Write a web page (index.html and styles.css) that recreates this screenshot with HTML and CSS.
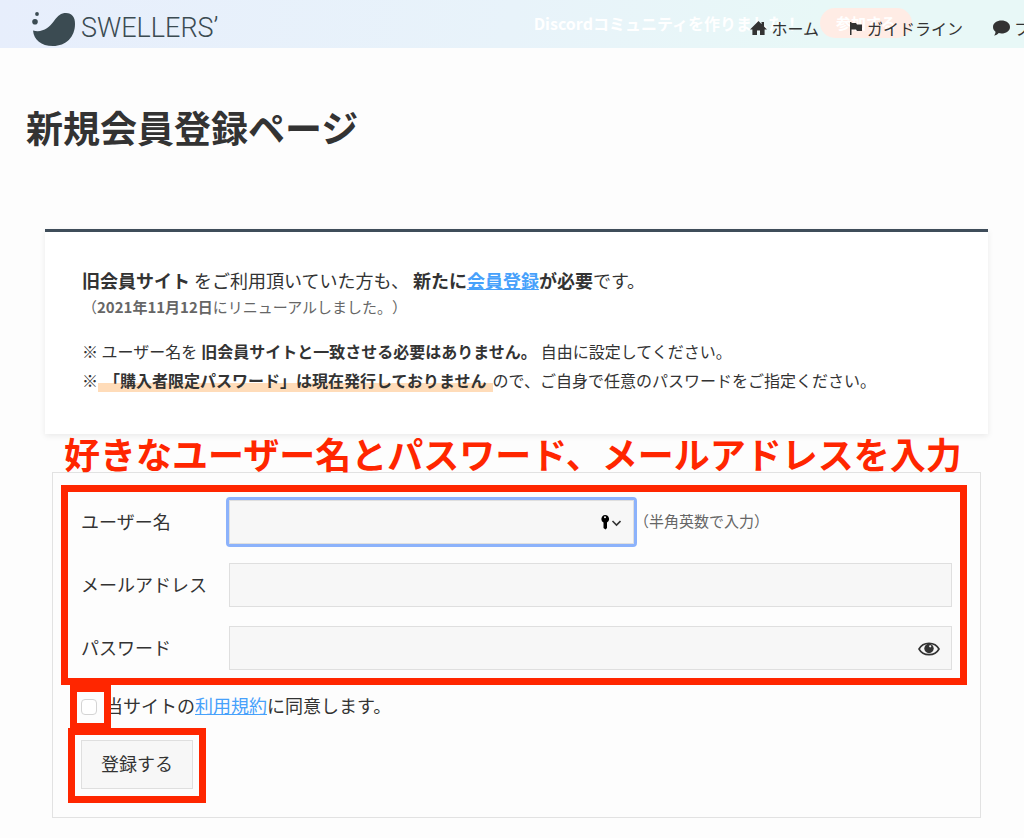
FILE: index.html
```html
<!DOCTYPE html>
<html lang="ja">
  <head>
    <meta charset="utf-8">
    <meta name="viewport" content="width=device-width, initial-scale=1">
    <title>新規会員登録ページ</title>
    <link rel="stylesheet" href="styles.css">
  </head>
  <body>
    <header class="header">
      <div class="promo">
        <span>Discordコミュニティを作りました！</span>
        <a class="promo-btn" href="#">参加する</a>
      </div>
      <a class="logo" href="#">
        <svg class="logo-mark" viewBox="0 0 44 36" aria-hidden="true">
          <circle cx="6" cy="4" r="1.900"/>
          <circle cx="4" cy="11.700" r="2.800"/>
          <path d="M2 20.500C11 23 18 18 23 11C27 5.500 30 3 35 3C41 3 44 7 44 14C44 27 35 36 22 36C10 36 3 30 2 20.500Z"/>
        </svg>
        <span>SWELLERS’</span>
      </a>
      <nav class="nav">
        <a href="#">
          <svg class="icon" viewBox="0 0 17 16" aria-hidden="true"><path d="M8.500 1L11.500 4V2H14V6.400L17 9.500H14.600V15H10V10.500H7V15H2.400V9.500H0Z"/></svg>
          ホーム
        </a>
        <a href="#">
          <svg class="icon icon-flag" viewBox="0 0 12 13" aria-hidden="true"><path d="M0 0H1.500V1H6L7 2.500H12V9H7L6 7.500H1.500V13H0Z"/></svg>
          ガイドライン
        </a>
        <a href="#">
          <svg class="icon" viewBox="0 0 17 16" aria-hidden="true"><path d="M8.500 0.500C13 0.500 17 3 17 7C17 11 13 13.500 8.500 13.500C7.500 13.500 6.500 13.400 5.700 13.100C4.500 14.500 3 15.500 1 15.500C2 14.500 2.500 13 2.500 11.700C1 10.500 0 9 0 7C0 3 4 0.500 8.500 0.500Z"/></svg>
          フ
        </a>
      </nav>
    </header>

    <main class="main">
      <h1>新規会員登録ページ</h1>

      <section class="info">
        <p class="lead"><strong class="old-site">旧会員サイト</strong>をご利用頂いていた方も、<strong class="required">新たに<a href="#">会員登録</a>が必要</strong>です。</p>
        <p class="renewal">（<strong>2021年11月12日</strong>にリニューアルしました。）</p>
        <ul class="notes">
          <li>※ ユーザー名を<strong class="free-name">旧会員サイトと一致させる必要はありません。</strong>自由に設定してください。</li>
          <li>※<strong class="marker">「購入者限定パスワード」は現在発行しておりません</strong>ので、ご自身で任意のパスワードをご指定ください。</li>
        </ul>
      </section>

      <p class="callout">好きなユーザー名とパスワード、メールアドレスを入力</p>

      <form class="form">
        <div class="fields">
          <div class="row">
            <label for="username">ユーザー名</label>
            <div class="control control-user">
              <input class="input focused" type="text" id="username">
              <svg class="key" viewBox="0 0 20 15" aria-hidden="true">
                <path fill-rule="evenodd" d="M4 0A4 4 0 0 1 6 7.500V13L4.500 14.500L2.500 13V7.500A4 4 0 0 1 4 0ZM4 1.300A1 1 0 0 0 4 3.300A1 1 0 0 0 4 1.300Z"/>
                <path class="line" d="M11.500 6L15.500 10L19.500 6"/>
              </svg>
            </div>
            <span class="hint">（半角英数で入力）</span>
          </div>
          <div class="row">
            <label for="email">メールアドレス</label>
            <div class="control">
              <input class="input" type="email" id="email">
            </div>
          </div>
          <div class="row">
            <label for="password">パスワード</label>
            <div class="control">
              <input class="input" type="password" id="password">
              <button class="eye" type="button" aria-label="パスワードを表示">
                <svg viewBox="0 0 22 14" aria-hidden="true">
                  <path class="line" d="M1 7C5 -0.500 17 -0.500 21 7C17 14.500 5 14.500 1 7Z"/>
                  <circle cx="11" cy="6.500" r="4.700"/>
                  <circle class="glint" cx="12.200" cy="4.300" r="1.100"/>
                </svg>
              </button>
            </div>
          </div>
        </div>

        <div class="agree">
          <span class="check-wrap"><input type="checkbox" id="agree"></span>
          <label for="agree">当サイトの<a href="#">利用規約</a>に同意します。</label>
        </div>

        <div class="submit">
          <button class="btn" type="submit">登録する</button>
        </div>
      </form>
    </main>
  </body>
</html>
```
FILE: styles.css
```css
* {
  box-sizing: border-box;
}

body {
  margin: 0;
  background: #fdfdfd;
  color: #333;
  font-family: 'Noto Sans CJK JP', sans-serif;
  font-size: 18px;
  text-spacing-trim: space-all;
}

a {
  color: #47a1fb;
}

h1,
p,
ul {
  margin: 0;
}

/* header */
.header {
  position: relative;
  display: flex;
  align-items: center;
  justify-content: space-between;
  height: 48px;
  padding-left: 31px;
  background: linear-gradient(100deg, #e7eefc 0%, #e8f3fa 50%, #e8f8f7 80%);
  overflow: hidden;
}

.promo {
  position: absolute;
  top: 8px;
  right: 112px;
  display: flex;
  align-items: center;
  gap: 20px;
  color: #fff;
  font-size: 16px;
  font-weight: 700;
  line-height: 30px;
}

.promo-btn {
  padding: 0 16px;
  border-radius: 15px;
  background: #ffece5;
  color: #fff;
  font-size: 15px;
  text-decoration: none;
}

.promo span {
  line-height: 28px;
}

.logo {
  position: relative;
  display: flex;
  align-items: center;
  gap: 6px;
  padding-top: 8px;
  color: #3b4b52;
  font-family: Roboto, sans-serif;
  font-size: 27px;
  font-weight: 300;
  line-height: 36px;
  text-decoration: none;
}

.logo-mark {
  width: 44px;
  height: 36px;
  fill: #3b4b52;
}

.nav {
  position: relative;
  display: flex;
  gap: 30px;
  padding-top: 8px;
  font-size: 16px;
  line-height: 24px;
  margin-right: -6px;
}

.nav a {
  display: flex;
  align-items: center;
  gap: 4px;
  color: #333;
  text-decoration: none;
}

.icon {
  width: 17px;
  height: 16px;
  fill: #333;
}

.icon-flag {
  width: 14px;
  height: 13px;
}

/* page */
.main {
  padding: 54px 17px 21px 26px;
}

h1 {
  font-size: 37px;
  font-weight: 700;
  line-height: 50px;
}

.info {
  margin: 77px 19px 0;
  padding: 32px 37px 39px;
  border-top: 3px solid #3f4d5a;
  background: #fff;
  box-shadow: 0 2px 6px rgba(0, 0, 0, 0.08);
}

.lead {
  line-height: 32px;
}

.old-site {
  margin-right: 4px;
}

.required {
  margin-left: 4px;
}

.renewal {
  color: #666;
  font-size: 15px;
  line-height: 22px;
}

.notes {
  margin-top: 19px;
  padding: 0;
  list-style: none;
  font-size: 16px;
  line-height: 29px;
}

.free-name {
  margin: 0 4px;
}

.marker {
  padding: 0 6px;
  background: linear-gradient(transparent 64%, #ffdcb9 64%);
}

.callout {
  margin: 0 38px;
  color: #ff2600;
  font-size: 36px;
  font-weight: 700;
  line-height: 38px;
  white-space: nowrap;
}

/* form */
.form {
  margin: 0 26px;
  padding: 12px 13px 14px 8px;
  border: 1px solid #e2e2e2;
}

.fields {
  display: flex;
  flex-direction: column;
  gap: 19px;
  padding: 8px 8px 8px 13px;
  border: 7px solid #ff2600;
}

.row {
  display: flex;
  align-items: center;
}

.row label {
  flex: 0 0 148px;
  padding-bottom: 3px;
}

.control {
  position: relative;
  flex: 1;
}

.control-user {
  flex: 0 0 56%;
  max-width: 405px;
}

.input {
  display: block;
  width: 100%;
  height: 44px;
  padding: 0 36px 0 12px;
  border: 1px solid #dfdfdf;
  border-radius: 0;
  background: #f7f7f7;
  font: inherit;
}

.focused,
.input:focus {
  outline: 3px solid #8cb2fb;
  border-radius: 1px;
}

.key {
  position: absolute;
  top: 15px;
  right: 13px;
  width: 20px;
  height: 15px;
}

.line {
  fill: none;
  stroke: currentColor;
  stroke-width: 1.6;
}

.eye {
  position: absolute;
  top: 16px;
  right: 12px;
  padding: 0;
  border: 0;
  background: none;
  color: #333;
  cursor: pointer;
}

.eye svg {
  display: block;
  width: 22px;
  height: 14px;
  fill: #333;
}

.eye .line {
  fill: none;
}

.eye .glint {
  fill: #f7f7f7;
}

.hint {
  padding-bottom: 3px;
  color: #666;
  font-size: 15px;
  white-space: nowrap;
}

.agree {
  display: flex;
  align-items: center;
  gap: 8px;
  height: 43px;
  padding-left: 20px;
}

.agree label {
  padding-bottom: 3px;
}

.check-wrap {
  position: relative;
  display: flex;
}

.check-wrap input {
  appearance: none;
  width: 16px;
  height: 16px;
  margin: 0;
  border: 1px solid #d4d4d4;
  border-radius: 4px;
  background: #fff;
}

/* red frame drawn over the start of the label */
.check-wrap::after {
  content: '';
  position: absolute;
  inset: -14px -14px -15px -11px;
  border: 7px solid #ff2600;
  pointer-events: none;
}

.submit {
  width: fit-content;
  margin-left: 7px;
  padding: 5px 6px 7px;
  border: 7px solid #ff2600;
}

.btn {
  display: block;
  padding: 0 19px 2px;
  border: 1px solid #dfdfdf;
  background: #f7f7f7;
  color: #333;
  font: inherit;
  line-height: 45px;
  cursor: pointer;
}
```
